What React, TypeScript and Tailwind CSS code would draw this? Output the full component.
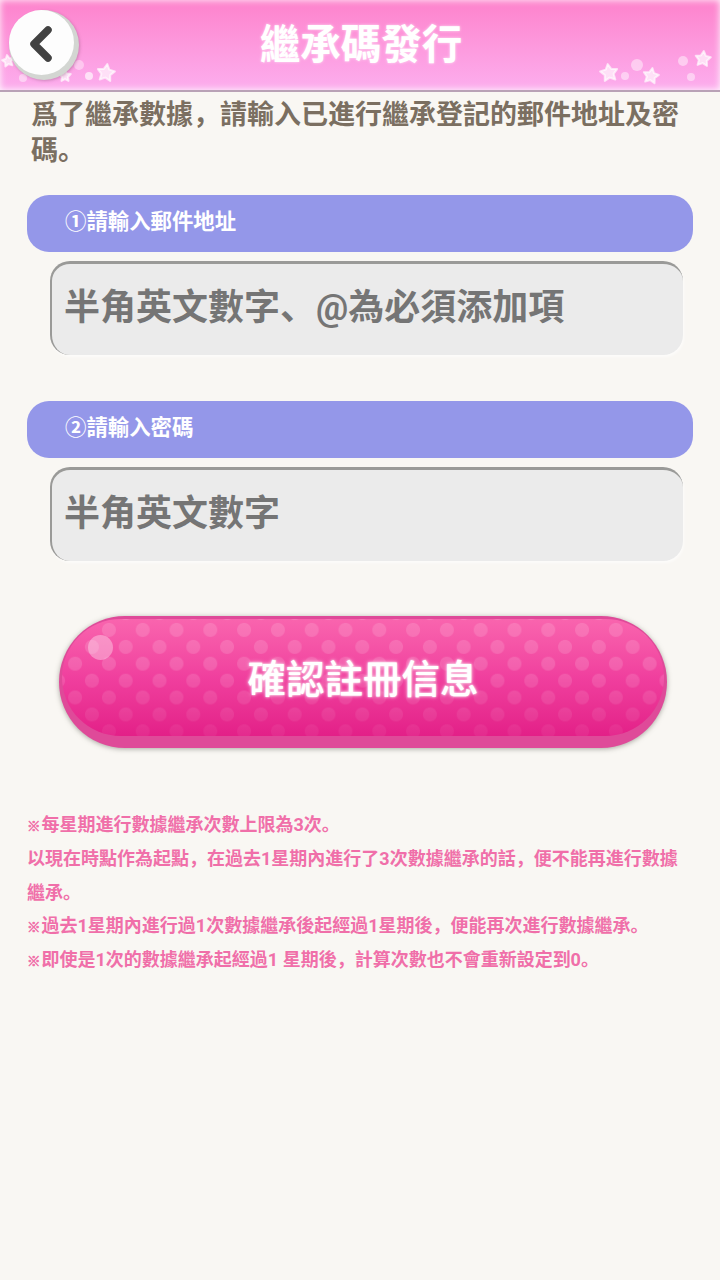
const font = "font-['Roboto','Noto_Sans_CJK_SC',sans-serif]"

function Star({ cx, cy, r, rotate = 0 }: { cx: number; cy: number; r: number; rotate?: number }) {
  const points = Array.from({ length: 10 }, (_, i) => {
    const radius = i % 2 === 0 ? r : r * 0.52
    const angle = ((i * 36 - 90 + rotate) * Math.PI) / 180
    return `${(cx + radius * Math.cos(angle)).toFixed(1)},${(cy + radius * Math.sin(angle)).toFixed(1)}`
  }).join(' ')
  return <polygon points={points} strokeLinejoin="round" stroke="currentColor" strokeWidth="2" />
}

function HeaderSparkles() {
  return (
    <svg className="absolute inset-0 text-white/65" width="720" height="90" viewBox="0 0 720 90" fill="currentColor">
      <Star cx={8} cy={61} r={6} rotate={-10} />
      <circle cx={23} cy={78} r={4} opacity="0.7" />
      <Star cx={65} cy={76} r={6} />
      <circle cx={79} cy={65} r={5} opacity="0.6" />
      <circle cx={89} cy={76} r={4} />
      <Star cx={106} cy={73} r={9} rotate={8} />
      <Star cx={609} cy={73} r={9} rotate={-8} />
      <circle cx={625} cy={76} r={4} opacity="0.7" />
      <circle cx={637} cy={65} r={6} opacity="0.7" />
      <Star cx={651} cy={76} r={8} rotate={10} />
      <circle cx={683} cy={61} r={5} opacity="0.7" />
      <circle cx={691} cy={77} r={4} opacity="0.7" />
      <Star cx={703} cy={59} r={8} rotate={6} />
    </svg>
  )
}

function BackButton() {
  return (
    <button className="absolute left-[9px] top-[10px] flex h-[70px] w-[70px] items-center justify-center rounded-full bg-[#d3d6d2] shadow-[1px_1px_3px_rgba(120,70,100,0.35)]">
      <span className="absolute left-0 top-0 h-[65px] w-[65px] rounded-full bg-[#fdfdfd]" />
      <svg className="absolute left-[17px] top-[15px]" width="40" height="40" viewBox="0 0 40 40" fill="none">
        <path d="M22 5 L8 19 L22 33" stroke="#424242" strokeWidth="7.5" strokeLinecap="round" strokeLinejoin="round" />
      </svg>
    </button>
  )
}

function Field({ label, placeholder }: { label: string; placeholder: string }) {
  return (
    <section>
      <div className="flex h-[57px] items-center rounded-[22px] bg-[#9497e9] pb-[2px] pl-[38px] text-[21.4px] font-bold text-white">
        {label}
      </div>
      <div className="ml-[23px] mr-[10px] mt-[9px] flex h-[94px] items-center rounded-[20px] border-l-2 border-t-[3px] border-[#9a9a98] bg-[#ebebeb] pb-[4px] pl-[12px] text-[36px] font-bold text-[#757575] shadow-[1px_2px_3px_rgba(255,255,255,0.6)]">
        {placeholder}
      </div>
    </section>
  )
}

function Note({ children }: { children: string }) {
  return (
    <p>
      <span className="mr-[1px] text-[13.5px] font-black leading-none [-webkit-text-stroke:0.6px_#f06fa9]">※</span>
      {children}
    </p>
  )
}

export default function App() {
  return (
    <div className={`${font} min-h-[1280px] w-[720px] bg-[#f9f7f3]`}>
      <header className="relative flex h-[92px] items-center justify-center border-b-2 border-[#b9a2b6] bg-gradient-to-b from-[#fd82cc] to-[#fcaeee] pl-[2px] shadow-[inset_0_0_7px_rgba(255,255,255,0.95)]">
        <HeaderSparkles />
        <BackButton />
        <h1 className="relative text-[40.5px] font-bold leading-none text-white [text-shadow:0_0_3px_rgba(255,255,255,0.7)]">
          繼承碼發行
        </h1>
      </header>

      <main className="px-[27px]">
        <p className="ml-[4px] mt-[5px] text-[27px] font-bold leading-[36px] text-[#7b6f61]">
          爲了繼承數據，請輸入已進行繼承登記的郵件地址及密碼。
        </p>

        <div className="mt-[26px] flex flex-col gap-[46px]">
          <Field label="①請輸入郵件地址" placeholder="半角英文數字、@為必須添加項" />
          <Field label="②請輸入密碼" placeholder="半角英文數字" />
        </div>

        {/* Glossy pill: rim and lip come from the outer shape, the dots from two offset radial layers */}
        <button className="relative ml-[32px] mt-[55px] block h-[132px] w-[608px] rounded-[66px] bg-[#df4a99] p-[3px] pb-[12px] shadow-[0_1px_5px_rgba(90,90,80,0.5)]">
          <span className="relative flex h-full w-full items-center justify-center overflow-hidden rounded-[62px] bg-gradient-to-b from-[#f964ae] via-[#f03f9e] to-[#e31f88]">
            <span className="absolute inset-0 bg-[radial-gradient(circle,rgba(255,255,255,0.14)_6.5px,transparent_7.5px),radial-gradient(circle,rgba(255,255,255,0.14)_6.5px,transparent_7.5px)] bg-[size:33.8px_33.8px] bg-[position:30px_-6px,13px_11px] [mask-image:linear-gradient(to_bottom,black_40%,rgba(0,0,0,0.35)_100%)]" />
            <span className="absolute left-[26px] top-[16px] h-[25px] w-[25px] rounded-full bg-white/35" />
            <span className="relative mt-[5px] text-[38.5px] font-medium leading-none text-white [text-shadow:0_0_2px_#fff,0_0_4px_#f9cfe4]">
              確認註冊信息
            </span>
          </span>
        </button>

        <div className="mt-[60px] text-[18px] font-bold leading-[33.8px] text-[#f06fa9]">
          <Note>每星期進行數據繼承次數上限為3次。</Note>
          <p>以現在時點作為起點，在過去1星期內進行了3次數據繼承的話，便不能再進行數據繼承。</p>
          <Note>過去1星期內進行過1次數據繼承後起經過1星期後，便能再次進行數據繼承。</Note>
          <Note>即使是1次的數據繼承起經過1 星期後，計算次數也不會重新設定到0。</Note>
        </div>
      </main>
    </div>
  )
}
